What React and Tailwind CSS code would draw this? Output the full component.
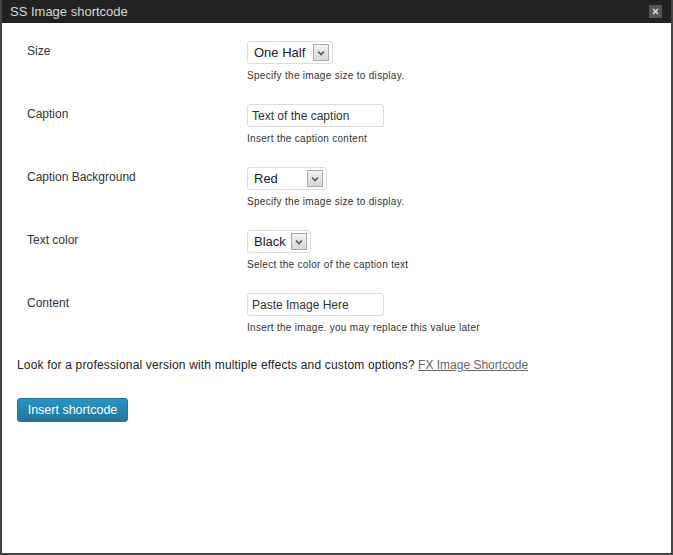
import React from 'react'

function SelectBox({ value, width }) {
  return (
    <div
      className="flex items-center justify-between h-[23px] border border-[#dcdcdc] rounded-[3px] bg-white pl-[6px] pr-[3px]"
      style={{ width }}
    >
      <span className="text-[13px] text-[#222] leading-none">{value}</span>
      <span className="flex items-center justify-center w-[16px] h-[17px] border border-[#a9a9a9] bg-gradient-to-b from-[#f2f2f2] to-[#d8d8d8]">
        <svg width="8" height="6" viewBox="0 0 8 6">
          <path d="M1 1.5 L4 4.5 L7 1.5" stroke="#555" strokeWidth="1.6" fill="none" />
        </svg>
      </span>
    </div>
  )
}

function TextBox({ value }) {
  return (
    <div className="flex items-center w-[137px] h-[23px] border border-[#dcdcdc] rounded-[3px] bg-white px-[4px]">
      <span className="text-[12px] text-[#333] leading-none">{value}</span>
    </div>
  )
}

const rows = [
  { label: 'Size', control: <SelectBox value="One Half" width={86} />, help: 'Specify the image size to display.' },
  { label: 'Caption', control: <TextBox value="Text of the caption" />, help: 'Insert the caption content' },
  { label: 'Caption Background', control: <SelectBox value="Red" width={80} />, help: 'Specify the image size to display.' },
  { label: 'Text color', control: <SelectBox value="Black" width={64} />, help: 'Select the color of the caption text' },
  { label: 'Content', control: <TextBox value="Paste Image Here" />, help: 'Insert the image. you may replace this value later' },
]

export default function App() {
  return (
    <div
      className="w-[673px] h-[555px] flex flex-col bg-white border-x-2 border-b-2 border-[#444]"
      style={{ fontFamily: '"Liberation Sans", Arial, sans-serif' }}
    >
      <div className="h-[23px] bg-[#222] flex items-center justify-between pl-[8px] pr-[9px] shrink-0">
        <span className="text-[13px] text-[#d8d8d8] leading-none">SS Image shortcode</span>
        <span className="flex items-center justify-center w-[13px] h-[13px] bg-[#555]">
          <svg width="7" height="7" viewBox="0 0 7 7">
            <path d="M1 1 L6 6 M6 1 L1 6" stroke="#ddd" strokeWidth="1.5" />
          </svg>
        </span>
      </div>

      <div className="flex flex-col pt-[18px]">
        {rows.map((r) => (
          <div key={r.label} className="flex pl-[25px] mb-[22px]">
            <div className="w-[220px] pt-[3px] text-[12px] leading-[14px] text-[#333]">{r.label}</div>
            <div className="flex flex-col">
              {r.control}
              <div className="mt-[6px] text-[10px] leading-[12px] tracking-[0.3px] text-[#333]">{r.help}</div>
            </div>
          </div>
        ))}

        <p className="pl-[15px] mt-[2px] text-[12px] leading-[14px] text-[#222]">
          <span className="tracking-[0.17px]">Look for a professional version with multiple effects and custom options?</span>{' '}
          <a className="text-[#666] underline">FX Image Shortcode</a>
        </p>

        <div className="pl-[15px] mt-[25px]">
          <button className="w-[111px] h-[24px] rounded-[3px] border border-[#21759b] bg-gradient-to-b from-[#2a95c5] to-[#21759b] text-white text-[12.5px] leading-none">
            Insert shortcode
          </button>
        </div>
      </div>
    </div>
  )
}
